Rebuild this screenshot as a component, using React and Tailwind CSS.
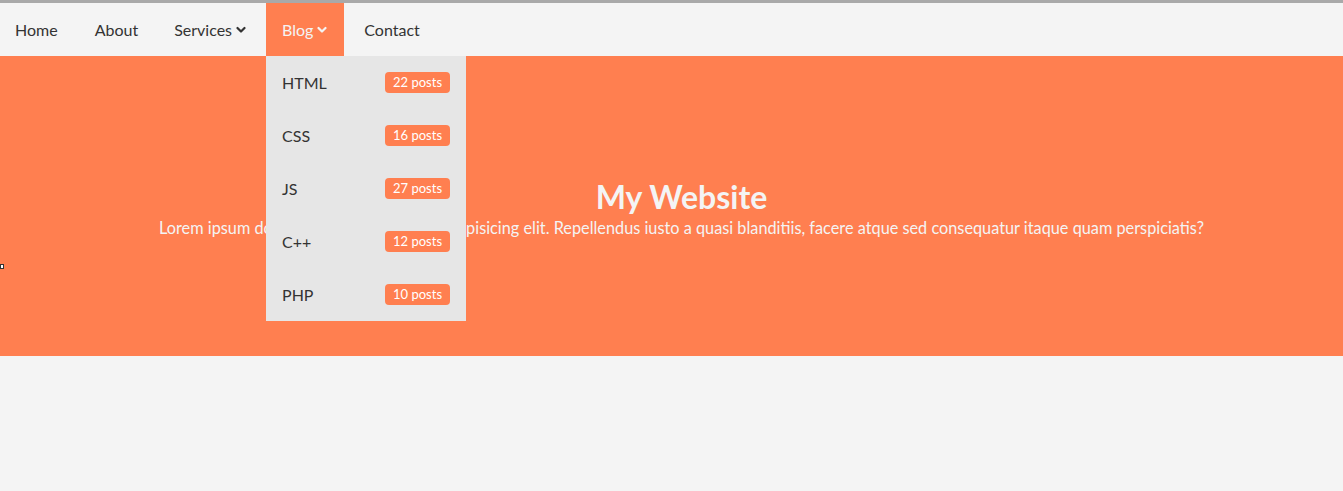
import React from 'react';

const posts = [
  { name: 'HTML', count: 22 },
  { name: 'CSS', count: 16 },
  { name: 'JS', count: 27 },
  { name: 'C++', count: 12 },
  { name: 'PHP', count: 10 },
];

function Chevron() {
  return (
    <svg width="10" height="10" viewBox="0 0 10 10" className="ml-1 inline-block">
      <path d="M1.5 3 L5 6.5 L8.5 3" fill="none" stroke="currentColor" strokeWidth="2.2" strokeLinecap="round" strokeLinejoin="round" />
    </svg>
  );
}

export default function App() {
  return (
    <div className="min-h-[491px] bg-[#f4f4f4] text-[#333] font-['Lato','Segoe_UI',sans-serif] border-t-[3px] border-[#a9a9a9]">
      {/* Navbar */}
      <nav className="relative flex h-[53px] items-stretch text-[16px]">
        <a className="flex items-center px-[15px]">Home</a>
        <a className="ml-[6px] flex items-center px-4">About</a>
        <a className="ml-[4px] flex items-center px-4">
          Services <Chevron />
        </a>
        <div className="relative ml-[4px] flex">
          <a className="flex items-center bg-[#ff7f50] px-4 pr-[17px] text-[#f4f4f4]">
            Blog <Chevron />
          </a>
          {/* Dropdown - sits over the hero */}
          <div className="absolute left-0 top-full z-10 w-[200px] bg-[#e6e6e6]">
            {posts.map(p => (
              <div key={p.name} className="flex h-[53px] items-center justify-between px-4">
                <span>{p.name}</span>
                <span className="rounded-[4px] bg-[#ff7f50] px-2 py-[2px] text-[13px] leading-[17px] text-white">
                  {p.count} posts
                </span>
              </div>
            ))}
          </div>
        </div>
        <a className="ml-[4px] flex items-center px-4">Contact</a>
      </nav>

      {/* Hero */}
      <header className="relative flex h-[300px] flex-col items-center justify-center bg-[#ff7f50] pl-5 pt-[6px] text-center text-[#f4f4f4]">
        <h1 className="text-[32px] font-bold leading-[38px]">My Website</h1>
        <p className="text-[16.3px] leading-[24px]">
          Lorem ipsum dolor sit amet consectetur adipisicing elit. Repellendus iusto a quasi blanditiis, facere atque sed consequatur itaque quam perspiciatis?
        </p>
        <span className="absolute left-0 top-[208px] h-[5px] w-[4px] border border-[#333] bg-white" />
      </header>
    </div>
  );
}
